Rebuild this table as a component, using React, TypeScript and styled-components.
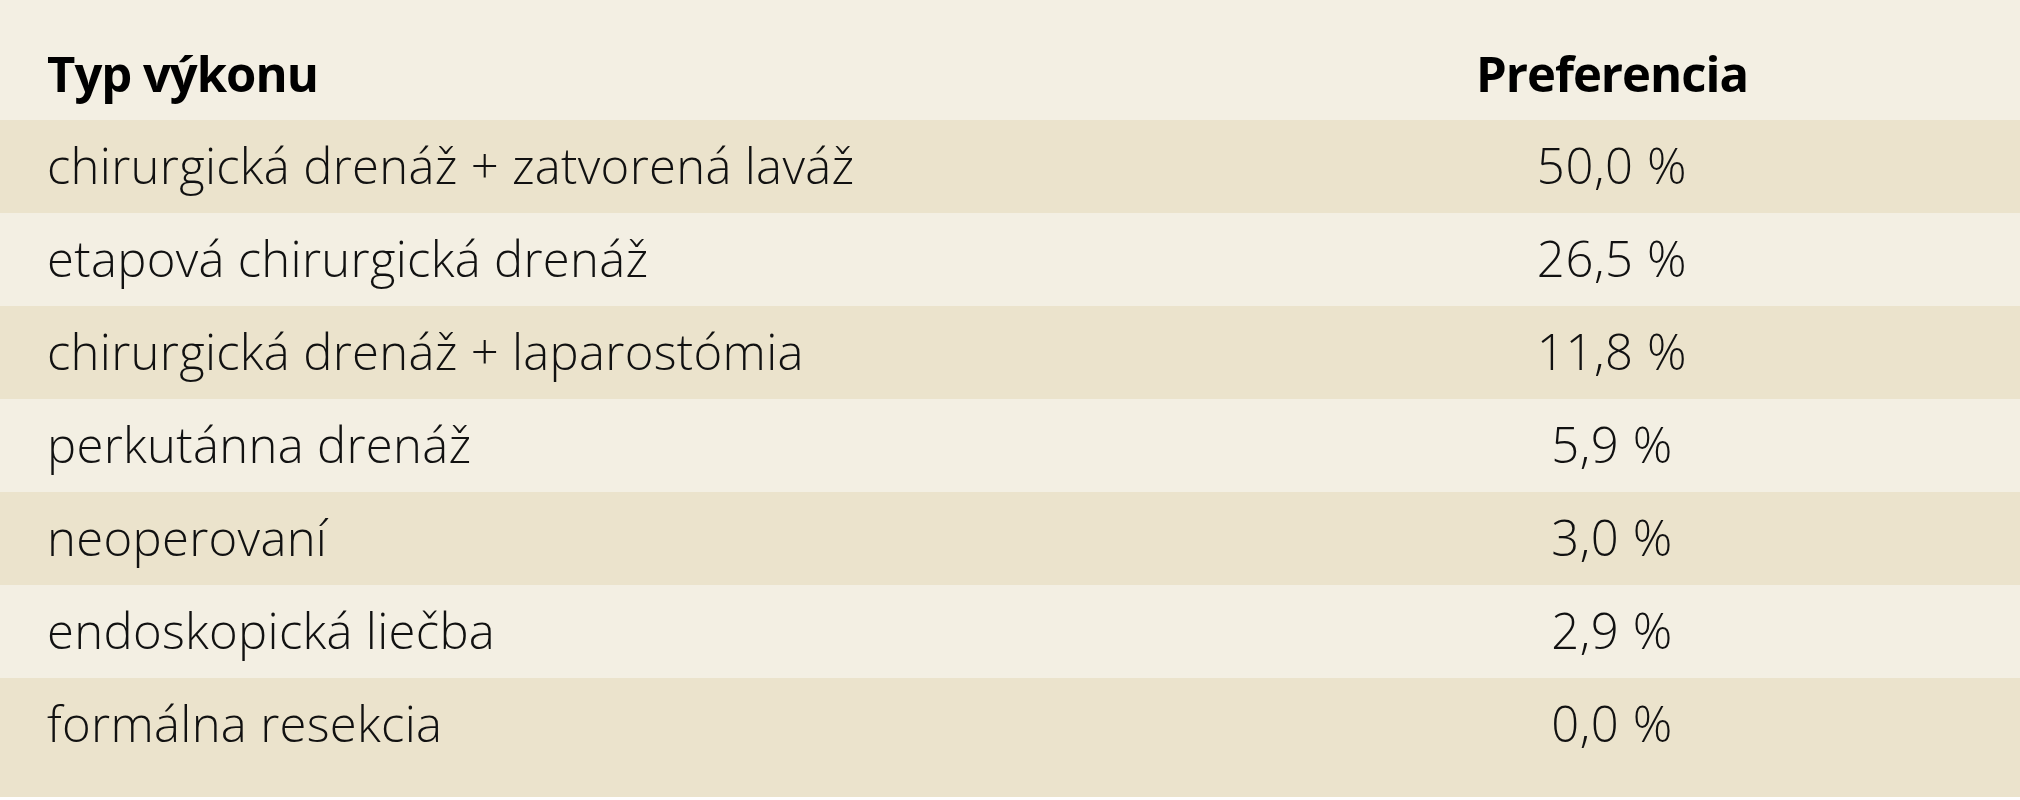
import styled, { createGlobalStyle } from 'styled-components'

const GlobalStyle = createGlobalStyle`
  html, body {
    margin: 0;
    background: #ffffff;
  }
`

const rows = [
  { type: 'chirurgická drenáž + zatvorená laváž', pref: '50,0 %' },
  { type: 'etapová chirurgická drenáž', pref: '26,5 %' },
  { type: 'chirurgická drenáž + laparostómia', pref: '11,8 %' },
  { type: 'perkutánna drenáž', pref: '5,9 %' },
  { type: 'neoperovaní', pref: '3,0 %' },
  { type: 'endoskopická liečba', pref: '2,9 %' },
  { type: 'formálna resekcia', pref: '0,0 %' },
]

const Table = styled.div`
  width: 2020px;
  font-family: 'Open Sans', 'Noto Sans', sans-serif;
  font-size: 49px;
  line-height: 50px;
`

const HeadRow = styled.div`
  display: grid;
  grid-template-columns: 1204px 1fr;
  height: 120px;
  box-sizing: border-box;
  padding-top: 48px;
  background: #f3efe3;
  color: #000;
  font-weight: 700;
  letter-spacing: -1px;
`

const Row = styled.div<{ $dark: boolean; $last: boolean }>`
  display: grid;
  grid-template-columns: 1204px 1fr;
  height: ${(p) => (p.$last ? 119 : 93)}px;
  box-sizing: border-box;
  padding-top: 20px;
  background: ${(p) => (p.$dark ? '#ebe3cc' : '#f3efe3')};
  color: #111;
  font-weight: 300;
  letter-spacing: 0.3px;
`

const TypeCell = styled.div`
  padding-left: 47px;
  white-space: nowrap;
`

const PrefCell = styled.div`
  text-align: center;
  white-space: nowrap;
  ${Row} & {
    letter-spacing: 0.6px;
  }
`

export default function App() {
  return (
    <>
      <GlobalStyle />
      <Table>
        <HeadRow>
          <TypeCell>Typ výkonu</TypeCell>
          <PrefCell>Preferencia</PrefCell>
        </HeadRow>
        {rows.map((r, i) => (
          <Row key={r.type} $dark={i % 2 === 0} $last={i === rows.length - 1}>
            <TypeCell>{r.type}</TypeCell>
            <PrefCell>{r.pref}</PrefCell>
          </Row>
        ))}
      </Table>
    </>
  )
}
